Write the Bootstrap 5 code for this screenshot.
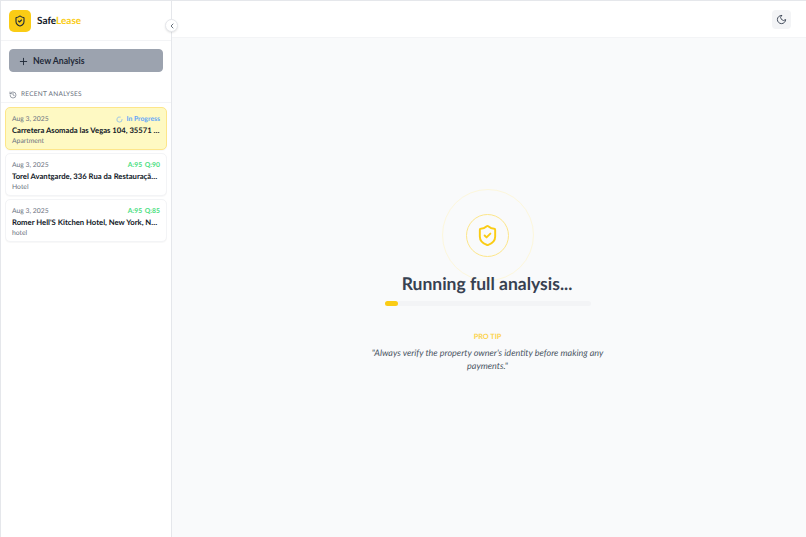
<!DOCTYPE html>
<html lang="en">
<head>
<meta charset="utf-8">
<title>SafeLease</title>
<link href="https://cdn.jsdelivr.net/npm/bootstrap@5.3.0/dist/css/bootstrap.min.css" rel="stylesheet">
<style>
html,body{height:100%;}
body{font-family:Lato,"Open Sans",sans-serif;background:#f9fafb;color:#1f2937;overflow:hidden;text-rendering:geometricPrecision;}
.shell{height:537px;border:1px solid #e5e7eb;border-bottom:0;border-right:0;}
.side{width:171px;flex:none;background:#fff;border-right:1px solid #e5e7eb;position:relative;}
.brand-row{height:40px;border-bottom:1px solid #f3f4f6;padding:0 8px;}
.logo-box{width:22px;height:22px;border-radius:5px;background:#facc15;}
.brand-name{font-size:10px;font-weight:700;color:#111827;margin-left:6px;padding-top:1px;}
.brand-name span{color:#facc15;}
.toggle-btn{position:absolute;top:18px;right:-7px;width:13px;height:13px;border-radius:50%;background:#fff;border:1px solid #e5e7eb;padding:0;z-index:2;box-shadow:0 1px 2px rgba(0,0,0,.1);}
.new-wrap{padding:8px 8px 0;}
.new-btn{width:100%;height:23px;background:#9ca3af;border:1px solid #9ca3af;border-radius:4px;color:#1f2937;font-size:8.7px;font-weight:700;padding:1px 0 0 8px;gap:4px;}
.recent-head{font-size:6.5px;letter-spacing:.25px;color:#6b7280;font-weight:400;padding:15px 8px 0;height:31px;border-bottom:1px solid #f3f4f6;gap:4px;}
.items{padding:4px 4px 0;gap:3px;}
.item{height:43px;background:#fff;border:1px solid #f3f4f6;border-radius:5px;padding:7px 6px 0;box-shadow:0 1px 1px rgba(0,0,0,.03);}
.item.on{background:#fef9c3;border-color:#fde68a;}
.item-top{font-size:6.8px;line-height:9px;color:#6b7280;}
.score{color:#4ade80;font-weight:700;word-spacing:1px;}
.prog{color:#60a5fa;font-weight:700;gap:3px;}
.item-title{font-size:7.7px;line-height:11px;font-weight:700;color:#111827;margin-top:1px;white-space:nowrap;overflow:hidden;text-overflow:ellipsis;}
.item-sub{font-size:6.8px;line-height:9px;color:#6b7280;margin-top:1px;}
.top-strip{height:37px;background:#fff;border-bottom:1px solid #f3f4f6;padding-right:15px;}
.theme-btn{width:19px;height:19px;background:#f3f4f6;border:0;border-radius:4px;padding:0;}
.stage{flex:1;position:relative;padding-top:151px;}
.rings{width:92px;height:92px;border-radius:50%;border:1px solid #fdf7dc;margin-left:-3px;}
.ring-in{width:43px;height:43px;border-radius:50%;border:1px solid #fde68a;}
.run-title{font-size:17.5px;line-height:24px;font-weight:700;color:#374151;margin-top:-9px;position:relative;margin-left:-4px;}
.track{width:206px;height:5px;border-radius:3px;background:#f3f4f6;margin-top:5px;margin-left:-3px;}
.fill{width:13px;height:5px;border-radius:3px;background:#facc15;}
.tip-label{font-size:7.3px;font-weight:700;color:#fcd34d;margin-top:25px;line-height:11px;margin-left:-3px;}
.tip-text{font-size:9px;line-height:13px;font-style:italic;color:#4b5563;width:250px;margin-top:4px;margin-left:-3px;}
</style>
</head>
<body>
<div class="shell d-flex">
  <aside class="side d-flex flex-column">
    <div class="brand-row d-flex align-items-center">
      <div class="logo-box d-flex align-items-center justify-content-center">
        <svg width="12" height="12" viewBox="0 0 24 24" fill="none" stroke="#1f2937" stroke-width="2.2" stroke-linecap="round" stroke-linejoin="round"><path d="M20 13c0 5-3.5 7.5-7.66 8.95a1 1 0 0 1-.67-.01C7.5 20.5 4 18 4 13V6a1 1 0 0 1 1-1c2 0 4.500-1.200 6.240-2.720a1.170 1.170 0 0 1 1.520 0C14.510 3.810 17 5 19 5a1 1 0 0 1 1 1z"/><path d="m9 12 2 2 4-4"/></svg>
      </div>
      <div class="brand-name">Safe<span>Lease</span></div>
    </div>
    <button class="toggle-btn d-flex align-items-center justify-content-center" aria-label="Collapse">
      <svg width="8" height="8" viewBox="0 0 24 24" fill="none" stroke="#4b5563" stroke-width="2.500" stroke-linecap="round" stroke-linejoin="round"><path d="m15 18-6-6 6-6"/></svg>
    </button>
    <div class="new-wrap">
      <button class="new-btn btn d-flex align-items-center">
        <svg width="11" height="11" viewBox="0 0 24 24" fill="none" stroke="#1f2937" stroke-width="2" stroke-linecap="round"><path d="M5 12h14M12 5v14"/></svg>
        New Analysis
      </button>
    </div>
    <div class="recent-head d-flex align-items-center text-uppercase">
      <svg width="8" height="8" viewBox="0 0 24 24" fill="none" stroke="#6b7280" stroke-width="2" stroke-linecap="round" stroke-linejoin="round"><path d="M3 12a9 9 0 1 0 9-9 9.750 9.750 0 0 0-6.740 2.740L3 8"/><path d="M3 3v5h5"/><path d="M12 7v5l4 2"/></svg>
      Recent Analyses
    </div>
    <div class="items d-flex flex-column">
      <div class="item on">
        <div class="item-top d-flex justify-content-between"><span>Aug 3, 2025</span>
          <span class="prog d-flex align-items-center"><svg width="7" height="7" viewBox="0 0 24 24" fill="none" stroke="#60a5fa" stroke-width="2" stroke-linecap="round"><path d="M21 12a9 9 0 1 1-6.220-8.560"/></svg>In Progress</span></div>
        <div class="item-title">Carretera Asomada las Vegas 104, 35571 Lanzarote</div>
        <div class="item-sub">Apartment</div>
      </div>
      <div class="item">
        <div class="item-top d-flex justify-content-between"><span>Aug 3, 2025</span><span class="score">A:95 Q:90</span></div>
        <div class="item-title">Torel Avantgarde, 336 Rua da Restauração, Porto</div>
        <div class="item-sub">Hotel</div>
      </div>
      <div class="item">
        <div class="item-top d-flex justify-content-between"><span>Aug 3, 2025</span><span class="score">A:95 Q:85</span></div>
        <div class="item-title">Romer Hell'S Kitchen Hotel, New York, New York</div>
        <div class="item-sub">hotel</div>
      </div>
    </div>
  </aside>
  <main class="flex-grow-1 d-flex flex-column">
    <div class="top-strip d-flex align-items-center justify-content-end">
      <button class="theme-btn d-flex align-items-center justify-content-center" aria-label="Theme">
        <svg width="11" height="11" viewBox="0 0 24 24" fill="none" stroke="#374151" stroke-width="2" stroke-linecap="round" stroke-linejoin="round"><path d="M12 3a6 6 0 0 0 9 9 9 9 0 1 1-9-9Z"/></svg>
      </button>
    </div>
    <div class="stage d-flex flex-column align-items-center text-center">
      <div class="rings d-flex align-items-center justify-content-center">
        <div class="ring-in d-flex align-items-center justify-content-center">
          <svg width="23" height="23" viewBox="0 0 24 24" fill="none" stroke="#facc15" stroke-width="2" stroke-linecap="round" stroke-linejoin="round"><path d="M20 13c0 5-3.5 7.5-7.66 8.95a1 1 0 0 1-.67-.01C7.5 20.5 4 18 4 13V6a1 1 0 0 1 1-1c2 0 4.500-1.200 6.240-2.720a1.170 1.170 0 0 1 1.520 0C14.510 3.810 17 5 19 5a1 1 0 0 1 1 1z"/><path d="m9 12 2 2 4-4"/></svg>
        </div>
      </div>
      <div class="run-title">Running full analysis...</div>
      <div class="track"><div class="fill"></div></div>
      <div class="tip-label text-uppercase">Pro Tip</div>
      <div class="tip-text">"Always verify the property owner's identity before making any payments."</div>
    </div>
  </main>
</div>
<script src="https://cdn.jsdelivr.net/npm/bootstrap@5.3.0/dist/js/bootstrap.bundle.min.js"></script>
</body>
</html>
